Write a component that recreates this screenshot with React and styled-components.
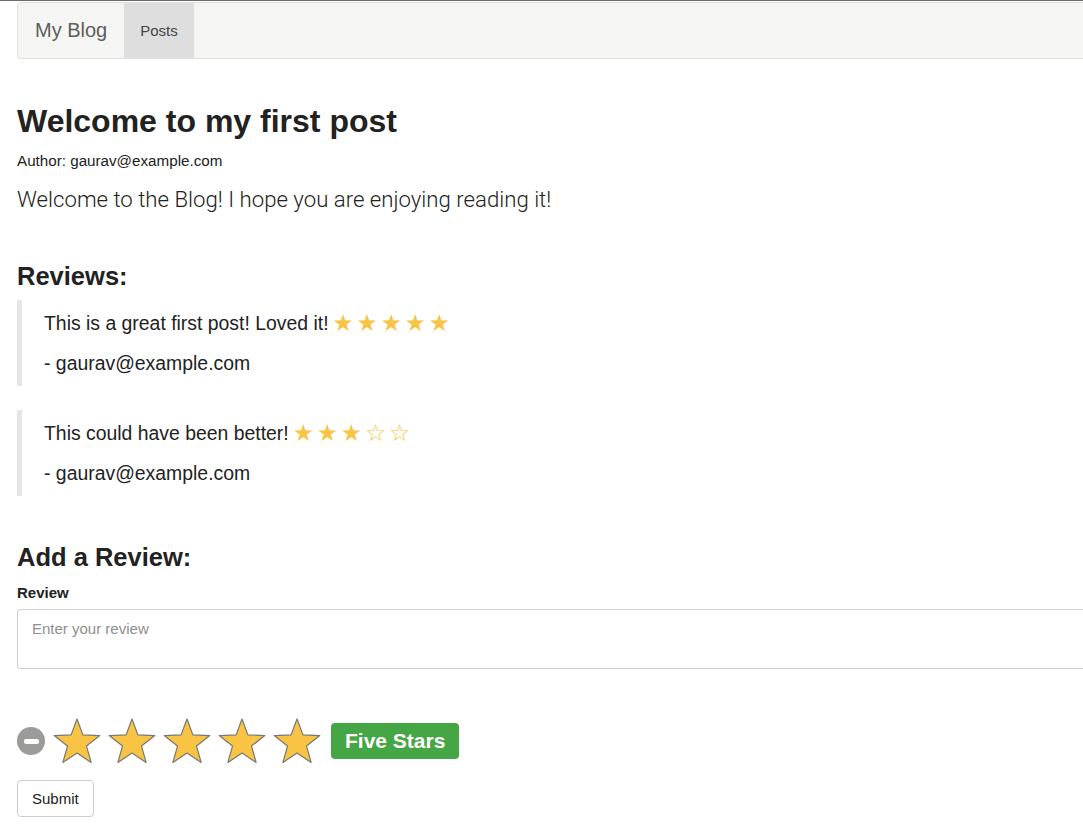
import React from "react";
import styled, { createGlobalStyle } from "styled-components";

const GlobalStyle = createGlobalStyle`
  html, body {
    margin: 0;
    padding: 0;
    background: #ffffff;
  }
  body {
    font-family: "Liberation Sans", Arial, sans-serif;
    color: #262626;
    border-top: 1px solid #6b6b6b;
  }
`;

const Page = styled.div`
  padding: 1px 0 0 17px;
  overflow: hidden;
`;

const Nav = styled.nav`
  display: flex;
  align-items: stretch;
  height: 55px;
  background: #f5f5f4;
  border: 1px solid #e2e2e2;
  border-right: none;
  border-radius: 4px 0 0 4px;
`;

const Brand = styled.a`
  display: flex;
  align-items: center;
  padding: 0 17px;
  font-size: 20px;
  color: #5e5e5e;
  text-decoration: none;
`;

const NavItem = styled.a`
  display: flex;
  align-items: center;
  padding: 0 16px;
  font-size: 15px;
  color: #444;
  text-decoration: none;
  background: ${(p) => (p.$active ? "#dedede" : "transparent")};
`;

const Title = styled.h1`
  margin: 45px 0 0;
  font-size: 32px;
  line-height: 35px;
  font-weight: 700;
  color: #222;
`;

const Author = styled.div`
  margin-top: 12px;
  font-size: 15.2px;
  line-height: 20px;
  color: #222;
`;

const Lead = styled.p`
  margin: 13px 0 0;
  font-family: Roboto, "Liberation Sans", sans-serif;
  font-weight: 300;
  font-size: 22.2px;
  line-height: 31px;
  color: #222;
`;

const SectionTitle = styled.h3`
  margin: ${(p) => p.$top}px 0 0;
  font-size: 25.5px;
  line-height: 28px;
  font-weight: 700;
  color: #222;
`;

const Quote = styled.blockquote`
  margin: ${(p) => p.$top}px 0 0;
  padding: 10px 0 9px 22px;
  border-left: 5px solid #e6e6e6;
  font-size: 19.4px;
  line-height: 27px;
  color: #222;

  p {
    margin: 0;
  }
  p + p {
    margin-top: 13px;
  }
`;

const SmallStars = styled.span`
  display: inline-flex;
  gap: 3px;
  margin-left: 4px;
  vertical-align: top;
  font-family: "DejaVu Sans", sans-serif;
  font-size: 23.5px;
  line-height: 27px;
  color: #f7c443;
`;

const Label = styled.label`
  display: block;
  margin-top: 12px;
  font-size: 15px;
  line-height: 20px;
  font-weight: 700;
  color: #222;
`;

const TextArea = styled.textarea`
  display: block;
  box-sizing: border-box;
  width: 100%;
  height: 60px;
  margin-top: 6px;
  padding: 9px 14px;
  border: 1px solid #cfcfcf;
  border-right: none;
  border-radius: 4px 0 0 4px;
  font-family: "Liberation Sans", Arial, sans-serif;
  font-size: 15px;
  line-height: 20px;
  resize: none;
  outline: none;

  &::placeholder {
    color: #8f8f8f;
  }
`;

const RatingRow = styled.div`
  display: flex;
  align-items: center;
  height: 50px;
  margin-top: 47px;
`;

const Cancel = styled.span`
  display: flex;
  align-items: center;
  justify-content: center;
  width: 28px;
  height: 28px;
  margin-right: 7px;
  border-radius: 50%;
  background: #9b9b99;

  &::after {
    content: "";
    width: 15px;
    height: 5px;
    border-radius: 2px;
    background: #ffffff;
  }
`;

const StarList = styled.div`
  display: flex;
  gap: 5px;
`;

const Badge = styled.span`
  display: flex;
  align-items: center;
  height: 36px;
  margin-left: 9px;
  padding: 0 14px;
  border-radius: 4px;
  background: #44a644;
  color: #ffffff;
  font-size: 21px;
  font-weight: 700;
`;

const SubmitButton = styled.button`
  display: block;
  height: 37px;
  margin-top: 14px;
  padding: 0 14px;
  background: #ffffff;
  border: 1px solid #cccccc;
  border-radius: 4px;
  font-family: "Liberation Sans", Arial, sans-serif;
  font-size: 15px;
  color: #222;
`;

const starPoints = (() => {
  const cx = 25;
  const cy = 26;
  const pts = [];
  for (let i = 0; i < 10; i++) {
    const r = i % 2 === 0 ? 24 : 10;
    const a = (Math.PI / 5) * i - Math.PI / 2;
    pts.push(`${(cx + r * Math.cos(a)).toFixed(2)},${(cy + r * Math.sin(a)).toFixed(2)}`);
  }
  return pts.join(" ");
})();

function BigStar() {
  return (
    <svg width="50" height="48" viewBox="0 0 50 48">
      <polygon points={starPoints} fill="#f9c443" stroke="#777" strokeWidth="1.2" strokeLinejoin="round" />
    </svg>
  );
}

function Stars({ count }) {
  return (
    <SmallStars>
      {[0, 1, 2, 3, 4].map((i) => (
        <span key={i}>{i < count ? "★" : "☆"}</span>
      ))}
    </SmallStars>
  );
}

const reviews = [
  { text: "This is a great first post! Loved it!", stars: 5, author: "gaurav@example.com" },
  { text: "This could have been better!", stars: 3, author: "gaurav@example.com" },
];

export default function App() {
  return (
    <>
      <GlobalStyle />
      <Page>
        <Nav>
          <Brand href="#">My Blog</Brand>
          <NavItem href="#" $active>
            Posts
          </NavItem>
        </Nav>

        <Title>Welcome to my first post</Title>
        <Author>Author: gaurav@example.com</Author>
        <Lead>Welcome to the Blog! I hope you are enjoying reading it!</Lead>

        <SectionTitle $top={47}>Reviews:</SectionTitle>
        {reviews.map((r, i) => (
          <Quote key={i} $top={i === 0 ? 10 : 24}>
            <p>
              {r.text}
              <Stars count={r.stars} />
            </p>
            <p>- {r.author}</p>
          </Quote>
        ))}

        <SectionTitle $top={47}>Add a Review:</SectionTitle>
        <Label>Review</Label>
        <TextArea placeholder="Enter your review" />

        <RatingRow>
          <Cancel />
          <StarList>
            {[0, 1, 2, 3, 4].map((i) => (
              <BigStar key={i} />
            ))}
          </StarList>
          <Badge>Five Stars</Badge>
        </RatingRow>
        <SubmitButton>Submit</SubmitButton>
      </Page>
    </>
  );
}
